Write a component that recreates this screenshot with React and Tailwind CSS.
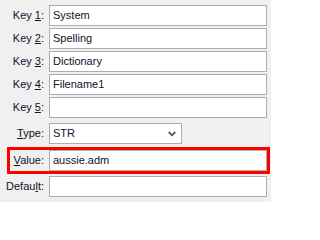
import React from 'react';

const Field = ({ label, value, className = '' }) => (
    <div className={`flex items-center ${className}`}>
        <label className="w-[44px] shrink-0 text-right whitespace-nowrap">{label}</label>
        <div className="ml-[5px] flex-1 h-[21px] border border-[#adadad] bg-white pl-[3px] flex items-center">
            {value}
        </div>
    </div>
);

const App = () => {
    return (
        <div
            className="w-[271px] h-[202px] bg-[#f0f0f0] pt-[5px] pr-[4px] text-[11px] text-[#10102a] leading-none"
            style={{ fontFamily: '"Liberation Sans", Arial, sans-serif' }}
        >
            <Field label={<>Key <u>1</u>:</>} value="System" />
            <Field label={<>Key <u>2</u>:</>} value="Spelling" className="mt-[2px]" />
            <Field label={<>Key <u>3</u>:</>} value="Dictionary" className="mt-[2px]" />
            <Field label={<>Key <u>4</u>:</>} value="Filename1" className="mt-[2px]" />
            <Field label={<>Key <u>5</u>:</>} value="" className="mt-[2px]" />

            {/* Type combobox */}
            <div className="flex items-center mt-[5px]">
                <label className="w-[44px] shrink-0 text-right whitespace-nowrap">
                    <u>T</u>ype:
                </label>
                <div className="ml-[5px] w-[133px] shrink-0 h-[21px] border border-[#adadad] bg-white pl-[3px] pr-[5px] flex items-center justify-between">
                    <span>STR</span>
                    <svg width="8" height="6" viewBox="0 0 8 6">
                        <path d="M0.7 1 L4 4.3 L7.3 1" fill="none" stroke="#5a5a5a" strokeWidth="1.8" />
                    </svg>
                </div>
            </div>

            {/* Value, highlighted */}
            <div className="relative mt-[6px]">
                <Field label={<><u>V</u>alue:</>} value="aussie.adm" />
                <div className="absolute left-[7px] -right-[3px] -top-[3px] -bottom-[3px] border-[3px] border-[#ff0000] pointer-events-none" />
            </div>

            <Field label={<>Defau<u>l</u>t:</>} value="" className="mt-[5px]" />
        </div>
    );
};

export default App;
